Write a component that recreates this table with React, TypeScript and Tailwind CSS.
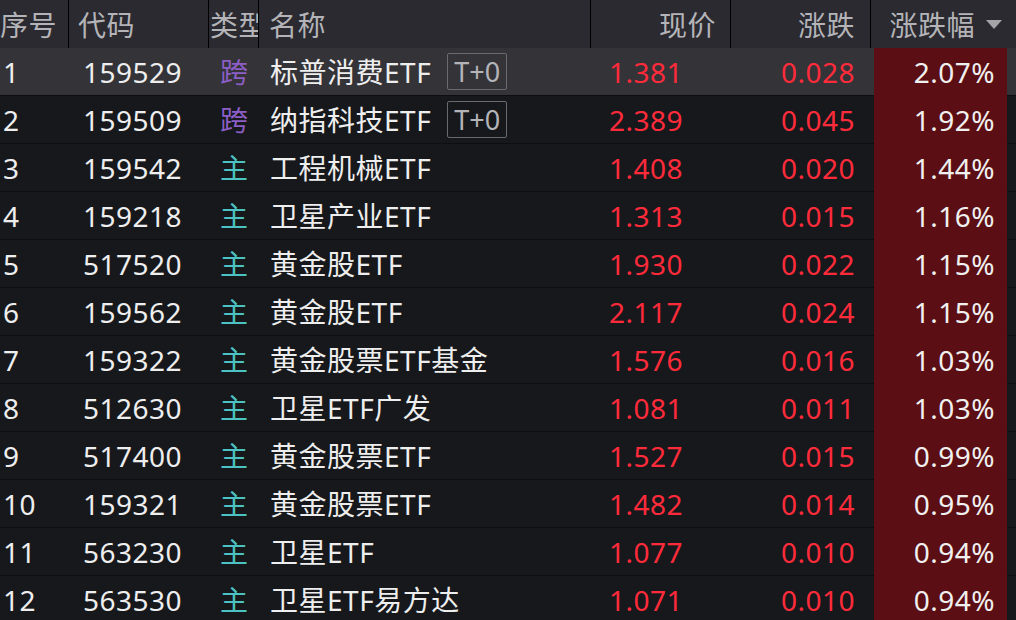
import React from "react";

type Row = {
  code: string;
  kind: "跨" | "主";
  name: string;
  t0?: boolean;
  price: string;
  change: string;
  pct: string;
};

const rows: Row[] = [
  { code: "159529", kind: "跨", name: "标普消费ETF", t0: true, price: "1.381", change: "0.028", pct: "2.07%" },
  { code: "159509", kind: "跨", name: "纳指科技ETF", t0: true, price: "2.389", change: "0.045", pct: "1.92%" },
  { code: "159542", kind: "主", name: "工程机械ETF", price: "1.408", change: "0.020", pct: "1.44%" },
  { code: "159218", kind: "主", name: "卫星产业ETF", price: "1.313", change: "0.015", pct: "1.16%" },
  { code: "517520", kind: "主", name: "黄金股ETF", price: "1.930", change: "0.022", pct: "1.15%" },
  { code: "159562", kind: "主", name: "黄金股ETF", price: "2.117", change: "0.024", pct: "1.15%" },
  { code: "159322", kind: "主", name: "黄金股票ETF基金", price: "1.576", change: "0.016", pct: "1.03%" },
  { code: "512630", kind: "主", name: "卫星ETF广发", price: "1.081", change: "0.011", pct: "1.03%" },
  { code: "517400", kind: "主", name: "黄金股票ETF", price: "1.527", change: "0.015", pct: "0.99%" },
  { code: "159321", kind: "主", name: "黄金股票ETF", price: "1.482", change: "0.014", pct: "0.95%" },
  { code: "563230", kind: "主", name: "卫星ETF", price: "1.077", change: "0.010", pct: "0.94%" },
  { code: "563530", kind: "主", name: "卫星ETF易方达", price: "1.071", change: "0.010", pct: "0.94%" },
];

const cols = "grid grid-cols-[69px_140px_50px_332px_140px_140px_145px]";

function HeaderCell({ children, className = "" }: { children: React.ReactNode; className?: string }) {
  return (
    <div className={`h-12 flex items-center pt-px border-r border-black overflow-hidden whitespace-nowrap ${className}`}>
      {children}
    </div>
  );
}

export default function App() {
  return (
    <div
      className="w-[1016px] h-[620px] overflow-hidden bg-[#16181c] text-[28px] leading-none tracking-[0.5px]"
      style={{ fontFamily: '"Noto Sans", "Noto Sans CJK SC", sans-serif' }}
    >
      <div className={`${cols} h-12 bg-[#2a2a30] text-[#b4b4b8]`}>
        <HeaderCell className="pl-0">序号</HeaderCell>
        <HeaderCell className="pl-[9px]">代码</HeaderCell>
        <HeaderCell className="pl-px">类型</HeaderCell>
        <HeaderCell className="pl-[10px]">名称</HeaderCell>
        <HeaderCell className="justify-end pr-[14px]">现价</HeaderCell>
        <HeaderCell className="justify-end pr-[15px]">涨跌</HeaderCell>
        <div className="h-12 flex items-center pt-px justify-end pr-[14px] gap-[11px] whitespace-nowrap">
          <span>涨跌幅</span>
          <svg width="16" height="10" viewBox="0 0 16 10">
            <polygon points="0,0 16,0 8,9" fill="#a4a4a8" />
          </svg>
        </div>
      </div>

      {rows.map((r, i) => (
        <div
          key={r.code}
          className={`${cols} h-12 border-b border-[#0d0e11] ${i === 0 ? "bg-[#333338]" : ""}`}
        >
          <div className="flex items-center pl-[3px] text-[#eeeeee]">{i + 1}</div>
          <div className="flex items-center pl-[14px] text-[#eeeeee]">{r.code}</div>
          <div
            className={`flex items-center pl-[11px] ${r.kind === "跨" ? "text-[#8d5fc6]" : "text-[#4cc2c2]"}`}
          >
            {r.kind}
          </div>
          <div className="flex items-center pl-[11px] text-[#eeeeee] whitespace-nowrap">
            {r.name}
            {r.t0 && (
              <span className="ml-[16px] h-[37px] w-[60px] flex items-center justify-center border border-[#6a6a6e] rounded-[2px] text-[#b4b4b8] text-[27px] tracking-normal">
                T+0
              </span>
            )}
          </div>
          <div className="flex items-center justify-end pr-[48px] text-[#ff2b3b]">{r.price}</div>
          <div className="flex items-center justify-end pr-[16px] text-[#ff2b3b]">{r.change}</div>
          <div className="flex items-center justify-end ml-[3px] mr-[9px] pr-[12px] bg-[#5b0e13] text-[#f0f0f0] -mb-px">
            {r.pct}
          </div>
        </div>
      ))}
    </div>
  );
}
